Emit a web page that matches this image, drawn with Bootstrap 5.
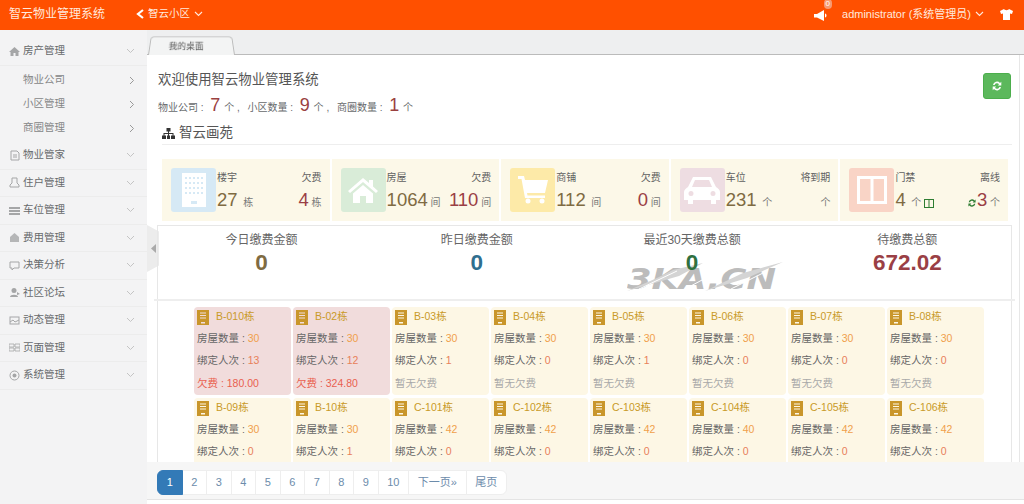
<!DOCTYPE html>
<html lang="zh">
<head>
  <meta charset="UTF-8" />
  <title>智云物业管理系统</title>
  <link href="https://cdn.jsdelivr.net/npm/bootstrap@5.3.0/dist/css/bootstrap.min.css" rel="stylesheet" />
  <style>
    html, body { height: 100%; overflow: hidden; }
    body {
      font-family: "Liberation Sans", "Noto Sans CJK SC", sans-serif;
      font-size: 10.5px;
      color: #676a6c;
      background: #f3f3f4;
    }
    .top-bar { height: 30px; background: #ff5000; color: #ffe9dd; padding-bottom: 2px; }
    .brand-name { width: 135px; padding-left: 9px; font-size: 12px; }
    .top-user { font-size: 11px; }
    .bell-wrap { position: relative; width: 18px; height: 14px; margin-right: 10px; }
    .bell-count { position: absolute; top: -8px; right: 0; font-size: 8px; line-height: 10px; color: #fff; background: #f69a72; border-radius: 5px; padding: 0 2px; }
    .shirt-ico { margin: 0 11px 0 16px; }
    .page-wrap { height: 474px; }
    .side-menu { width: 147px; flex: none; background: #f3f3f4; }
    .side-item { height: 27.5px; padding: 0 12px 0 9px; border-bottom: 1px solid #ececec; color: #676a6c; }
    .side-item .ico { width: 11px; margin-right: 3px; flex: none; }
    .side-head { height: 36px; padding-top: 7px; }
    .side-sub { height: 24px; padding: 0 12px 0 23px; color: #858687; }
    .side-subs { padding: 2px 0; height: 76px; }
    .main-area { flex: 1; min-width: 0; position: relative; background: #fff; }
    .tab-bar { height: 25px; background: #eeeff0; border-bottom: 1px solid #bbb; padding-left: 1px; }
    .tab-one {
      width: 87px; height: 20px; margin-top: 5px; font-size: 9px; line-height: 20px; color: #555;
      background: #f3f4f4; border: 1px solid #bbb; border-bottom: 0; border-radius: 4px 4px 0 0;
      transform: perspective(30px) rotateX(6deg); transform-origin: bottom; padding-left: 19px;
    }
    .tab-label { display: block; }
    .content-pane { flex: 1; min-height: 0; overflow: hidden; padding: 0 7px 0 11px; border-right: 1px solid #e7e7e7; margin-right: 4px; }
    .welcome { font-size: 13.4px; line-height: 20px; color: #555; padding-top: 15px; }
    .count-line { font-size: 10px; line-height: 20px; margin-top: 5px; color: #676a6c; }
    .count-line b { font-weight: 400; font-size: 18px; color: #9a4040; font-family: "Liberation Sans", sans-serif; margin: 0 1px 0 4px; }
    .count-line .sep { margin-right: 5px; }
    .refresh-btn { width: 28px; height: 26px; background: #5cb85c; border: 1px solid #4cae4c; border-radius: 3px; padding: 0; position: absolute; right: 13px; top: 43px; }
    .section-title { font-size: 13.5px; line-height: 22px; color: #555; margin: 4px 0 0 4px; border-bottom: 1px solid #eee; }
    .stat-row { display: flex; gap: 2px; margin: 14px 4px 0; height: 62px; }
    .stat-cell { flex: 1; display: flex; background: #fcf8e8; padding: 9px 8px 0 9px; min-width: 0; }
    .stat-ico { width: 45px; height: 44px; border-radius: 3px; flex: none; display: flex; align-items: center; justify-content: center; }
    .stat-body { flex: 1; min-width: 0; padding-left: 1px; }
    .stat-line { display: flex; justify-content: space-between; align-items: baseline; white-space: nowrap; }
    .stat-line.names { font-size: 10px; line-height: 14px; margin-top: 3px; color: #5f5f5f; }
    .stat-line.nums { font-size: 10px; margin-top: 2px; line-height: 26px; color: #777; }
    .stat-line.nums b { font-weight: 400; font-size: 18.5px; font-family: "Liberation Sans", sans-serif; color: #7f6b42; }
    .stat-line.nums b.owed { color: #9a3f45; }
    .money-box { margin: 4px 0 0 -1px; border: 1px solid #e7e7e7; position: relative; }
    .money-row { display: flex; height: 75px; border-bottom: 2px solid #eeeeee; margin: 0 -4px; }
    .money-cell { flex: 1; text-align: center; padding-top: 7px; color: #666; font-size: 12px; line-height: 14px; position: relative; z-index: 1; }
    .money-cell strong { display: block; font-size: 22.5px; line-height: 26px; margin-top: 3px; font-family: "Liberation Sans", sans-serif; }
    .wmark {
      position: absolute; left: 469px; top: 35px; font-family: "DejaVu Sans", sans-serif; font-size: 29px; line-height: 36px; font-weight: 700; font-style: italic;
      color: #bcbcbc; white-space: nowrap; transform: scaleX(1.22); transform-origin: left;
    }
    .wmark-streaks { position: absolute; left: 469px; top: 35px; }
    .tower-grid { display: grid; grid-template-columns: repeat(8, 97px); gap: 3px 2px; padding: 6px 0 0 36px; }
    .tower-card { height: 88px; background: #fdf7e5; border-radius: 4px; padding: 0 3px; font-size: 10.5px; color: #666; }
    .tower-card.in-debt { background: #f1dcdc; }
    .tower-name { height: 20px; color: #c99a28; font-size: 10.5px; display: flex; align-items: center; gap: 7px; }
    .tower-line { line-height: 22.4px; white-space: nowrap; }
    .tower-line i { font-style: normal; color: #f0a04b; }
    .tower-line.red-num i { color: #e8805a; }
    .tower-line.owe, .tower-line.owe i { color: #e95f50; }
    .tower-line.none { color: #a9a9a9; }
    .pager-bar { height: 38px; flex: none; background: #f6f6f6; border-bottom: 1px solid #e4e4e4; margin-bottom: 4px; padding: 8px 0 0 10px; }
    .pager-bar .pagination { margin: 0; }
    .pager-bar .page-link { font-size: 11px; line-height: 13px; height: 25px; padding: 5px 8.7px; color: #6c8cab; border-color: #eee; }
    .pager-bar .page-item.active .page-link { background: #337ab7; border-color: #337ab7; color: #fff; }
    .side-flap { position: absolute; left: 0; top: 195px; width: 12px; height: 47px; background: #ececec; clip-path: polygon(0 0, 100% 14%, 100% 86%, 0 100%); display: flex; align-items: center; justify-content: center; }
  </style>
</head>
<body>
  <nav class="top-bar d-flex align-items-center">
    <div class="brand-name">智云物业管理系统</div>
    <div class="d-flex align-items-center gap-1">
      <svg width="9" height="10" viewBox="0 0 9 10"><path d="M8 1 3 5l5 4" fill="none" stroke="#fff" stroke-width="2.2"/></svg>
      <span>智云小区</span>
      <svg width="9" height="6" viewBox="0 0 9 6"><path d="M1 1l3.500 3.500L8 1" fill="none" stroke="#ffe9dd" stroke-width="1.1"/></svg>
    </div>
    <div class="ms-auto d-flex align-items-center top-user">
      <div class="bell-wrap">
        <svg width="14" height="12" viewBox="0 0 14 12"><path d="M0 4h3l7-4v11L3 7.500H0zM11 3.500c2 .5 2 3.500 0 4z" fill="#fff"/></svg>
        <span class="bell-count">0</span>
      </div>
      <span>administrator (系统管理员)</span>
      <svg width="9" height="6" viewBox="0 0 9 6" class="ms-1"><path d="M1 1l3.500 3.500L8 1" fill="none" stroke="#ffe9dd" stroke-width="1.1"/></svg>
      <svg width="13" height="11" viewBox="0 0 13 11" class="shirt-ico"><path d="M4 0 0 2l1 3 2-.6V11h7V4.400l2 .6 1-3-4-2c-.5 1.500-4.500 1.500-5 0z" fill="#fff"/></svg>
    </div>
  </nav>

  <div class="page-wrap d-flex">
    <aside class="side-menu" id="sideMenu"></aside>

    <main class="main-area d-flex flex-column">
      <div class="tab-bar d-flex">
        <div class="tab-one"><span class="tab-label">我的桌面</span></div>
      </div>
      <div class="side-flap">
        <svg width="5" height="9" viewBox="0 0 5 9"><path d="M5 0v9L0 4.500z" fill="#aaa"/></svg>
      </div>
      <div class="content-pane">
        <div class="welcome">欢迎使用智云物业管理系统</div>
        <div class="count-line">物业公司 : <b>7</b> 个 <span class="sep">,</span> 小区数量 : <b>9</b> 个 <span class="sep">,</span> 商圈数量 : <b>1</b> 个</div>
        <button class="refresh-btn" aria-label="刷新">
          <svg width="12" height="12" viewBox="0 0 12 12"><path d="M2 5a4 4 0 0 1 7-2l1.300-1.200V5.500H6.800L8 4.200A2.500 2.500 0 0 0 3.600 5zM10 7a4 4 0 0 1-7 2l-1.300 1.200V6.500h3.500L4 7.800A2.500 2.500 0 0 0 8.400 7z" fill="#fff"/></svg>
        </button>
        <div class="section-title d-flex align-items-center gap-1">
          <svg width="13" height="11" viewBox="0 0 13 11"><path d="M4.500 0h4v3.500H7V5h4.500v2.500H13V11H9V7.500h1.500V6H7v1.500h1V11H5V7.500h1V6H2.500v1.500H4V11H0V7.500h1.500V5H6V3.500H4.500z" fill="#333"/></svg>
          <span>智云画苑</span>
        </div>

        <div class="stat-row">
          <div class="stat-cell">
            <div class="stat-ico" style="background:#d6e9f5">
              <svg width="24" height="34" viewBox="0 0 24 34"><rect width="24" height="34" fill="#fff"/><g fill="#d6e9f5"><rect x="3" y="4" width="2" height="2"/><rect x="7" y="4" width="2" height="2"/><rect x="11" y="4" width="2" height="2"/><rect x="15" y="4" width="2" height="2"/><rect x="19" y="4" width="2" height="2"/><rect x="3" y="9" width="2" height="2"/><rect x="7" y="9" width="2" height="2"/><rect x="11" y="9" width="2" height="2"/><rect x="15" y="9" width="2" height="2"/><rect x="19" y="9" width="2" height="2"/><rect x="3" y="14" width="2" height="2"/><rect x="7" y="14" width="2" height="2"/><rect x="11" y="14" width="2" height="2"/><rect x="15" y="14" width="2" height="2"/><rect x="19" y="14" width="2" height="2"/><rect x="3" y="19" width="2" height="2"/><rect x="7" y="19" width="2" height="2"/><rect x="11" y="19" width="2" height="2"/><rect x="15" y="19" width="2" height="2"/><rect x="19" y="19" width="2" height="2"/><rect x="9" y="28" width="6" height="3"/></g></svg>
            </div>
            <div class="stat-body">
              <div class="stat-line names"><span>楼宇</span><span>欠费</span></div>
              <div class="stat-line nums"><span><b>27</b> &nbsp;栋</span><span><b class="owed">4</b> 栋</span></div>
            </div>
          </div>
          <div class="stat-cell">
            <div class="stat-ico" style="background:#d9ecd8">
              <svg width="30" height="25" viewBox="0 0 30 25"><path d="M15 0 0 13l2 2L15 4l13 11 2-2-5-4.400V2h-4v3zM5 15.500V25h7v-7h6v7h7v-9.500L15 7z" fill="#fff"/></svg>
            </div>
            <div class="stat-body">
              <div class="stat-line names"><span>房屋</span><span>欠费</span></div>
              <div class="stat-line nums"><span><b>1064</b> 间</span><span><b class="owed">110</b> 间</span></div>
            </div>
          </div>
          <div class="stat-cell">
            <div class="stat-ico" style="background:#fdeaa8">
              <svg width="30" height="28" viewBox="0 0 30 28"><path d="M0 0h6l1 4h23l-3 13H9l.5 2.500H27V22H7L3.500 3H0z" fill="#fff"/><circle cx="10" cy="25" r="2.500" fill="#fff"/><circle cx="24" cy="25" r="2.500" fill="#fff"/></svg>
            </div>
            <div class="stat-body">
              <div class="stat-line names"><span>商铺</span><span>欠费</span></div>
              <div class="stat-line nums"><span><b>112</b> &nbsp;间</span><span><b class="owed">0</b> 间</span></div>
            </div>
          </div>
          <div class="stat-cell">
            <div class="stat-ico" style="background:#eedde2">
              <svg width="36" height="27" viewBox="0 0 36 27"><path fill-rule="evenodd" d="M9 0h18l5 10c2 1 4 3 4 5v8h-4v4h-5v-4H9v4H4v-4H0v-8c0-2 2-4 4-5zM11 3 8 10h20l-3-7zM7 14a2.500 2.500 0 1 0 0 5 2.500 2.500 0 0 0 0-5zM29 14a2.500 2.500 0 1 0 0 5 2.500 2.500 0 0 0 0-5z" fill="#fff"/></svg>
            </div>
            <div class="stat-body">
              <div class="stat-line names"><span>车位</span><span>将到期</span></div>
              <div class="stat-line nums"><span><b>231</b> &nbsp;个</span><span>个</span></div>
            </div>
          </div>
          <div class="stat-cell">
            <div class="stat-ico" style="background:#f9d4c6">
              <svg width="30" height="28" viewBox="0 0 30 28"><path fill-rule="evenodd" d="M0 0h30v28H0zM3 3v22h10.500V3zM16.500 3v22H27V3z" fill="#fff"/></svg>
            </div>
            <div class="stat-body">
              <div class="stat-line names"><span>门禁</span><span>离线</span></div>
              <div class="stat-line nums">
                <span><b>4</b> &nbsp;个 <svg width="10" height="9" viewBox="0 0 10 9"><path fill-rule="evenodd" d="M0 0h10v9H0zM1 1v7h3.500V1zM5.500 1v7H9V1z" fill="#2e7d32"/></svg></span>
                <span><svg width="10" height="10" viewBox="0 0 12 12"><path d="M2 5a4 4 0 0 1 7-2l1.300-1.200V5.500H6.800L8 4.200A2.500 2.500 0 0 0 3.600 5zM10 7a4 4 0 0 1-7 2l-1.300 1.200V6.500h3.500L4 7.800A2.500 2.500 0 0 0 8.400 7z" fill="#2e7d32"/></svg><b class="owed">3</b> 个</span>
              </div>
            </div>
          </div>
        </div>

        <div class="money-box">
          <div class="wmark">3KA.CN</div>
          <svg class="wmark-streaks" width="165" height="36" viewBox="0 0 165 36">
            <path d="M0 30 30 17 46 9 76 2 52 15zM78 30 116 12 156 1 120 17z" fill="#d4d4d4"/>
            <path d="M12 28 50 10M60 27 92 10M104 28 140 10" stroke="#fff" stroke-width="1" fill="none"/>
          </svg>
          <div class="money-row">
            <div class="money-cell">今日缴费金额<strong style="color:#7f6b42">0</strong></div>
            <div class="money-cell">昨日缴费金额<strong style="color:#2f6f8f">0</strong></div>
            <div class="money-cell">最近30天缴费总额<strong style="color:#2f7040">0</strong></div>
            <div class="money-cell">待缴费总额<strong style="color:#9a3f45">672.02</strong></div>
          </div>
          <div class="tower-grid" id="towerGrid"></div>
        </div>
      </div>
      <div class="pager-bar">
        <ul class="pagination">
          <li class="page-item active"><a class="page-link" href="#">1</a></li>
          <li class="page-item"><a class="page-link" href="#">2</a></li>
          <li class="page-item"><a class="page-link" href="#">3</a></li>
          <li class="page-item"><a class="page-link" href="#">4</a></li>
          <li class="page-item"><a class="page-link" href="#">5</a></li>
          <li class="page-item"><a class="page-link" href="#">6</a></li>
          <li class="page-item"><a class="page-link" href="#">7</a></li>
          <li class="page-item"><a class="page-link" href="#">8</a></li>
          <li class="page-item"><a class="page-link" href="#">9</a></li>
          <li class="page-item"><a class="page-link" href="#">10</a></li>
          <li class="page-item"><a class="page-link" href="#">下一页»</a></li>
          <li class="page-item"><a class="page-link" href="#">尾页</a></li>
        </ul>
      </div>
    </main>
  </div>

  <script>
    const chev = '<svg class="ms-auto" width="9" height="6" viewBox="0 0 9 6"><path d="M1 1l3.500 3.500L8 1" fill="none" stroke="#c4c4c4" stroke-width="1"/></svg>';
    const chevR = '<svg class="ms-auto" width="6" height="9" viewBox="0 0 6 9"><path d="M1 1l3.500 3.500L1 8" fill="none" stroke="#999" stroke-width="1"/></svg>';
    const c = '#a5a6a7';
    const icons = {
      house: `<path d="M5.500 1 0 6h1.500v4h3V7h2v3h3V6H11z" fill="${c}"/>`,
      doc: `<path d="M2 1h6l2 2v7H2z" fill="none" stroke="${c}"/><path d="M4 5h4M4 7h4" stroke="${c}"/>`,
      user: `<path d="M3 1h5v5l2 2v2H1V8l2-2z" fill="none" stroke="${c}"/>`,
      bars: `<path d="M0 2h11v2H0zM0 5h11v2H0zM0 8h11v2H0z" fill="${c}"/>`,
      coin: `<path d="M5.500 1 1 5v5h9V5z" fill="${c}" opacity=".8"/>`,
      card: `<path d="M1 2h9v6H5l-2 2V8H1z" fill="none" stroke="${c}"/>`,
      person: `<circle cx="5" cy="3.500" r="2.500" fill="${c}"/><path d="M1 10c0-3 8-3 8 0zM8 5l3 2-3 1z" fill="${c}"/>`,
      pic: `<rect x="1" y="2" width="9" height="7" fill="none" stroke="${c}"/><path d="M1 7l3-2 2 2 4-2" fill="none" stroke="${c}"/>`,
      grid: `<path d="M0 2h5v3H0zM6 2h5v3H6zM0 6h5v3H0zM6 6h5v3H6z" fill="none" stroke="${c}" stroke-width=".8"/>`,
      gear: `<circle cx="5.500" cy="5.500" r="4.500" fill="none" stroke="${c}"/><circle cx="5.500" cy="5.500" r="2" fill="${c}"/>`
    };
    const ico = n => `<svg class="ico" width="11" height="11" viewBox="0 0 11 11">${icons[n]}</svg>`;
    const menu = [['物业管家','doc'],['住户管理','user'],['车位管理','bars'],['费用管理','coin'],['决策分析','card'],['社区论坛','person'],['动态管理','pic'],['页面管理','grid'],['系统管理','gear']];
    let html = `<div class="side-item side-head d-flex align-items-center">${ico('house')}<span>房产管理</span>${chev}</div><div class="side-subs">`;
    ['物业公司','小区管理','商圈管理'].forEach(t => { html += `<div class="side-sub d-flex align-items-center"><span>${t}</span>${chevR}</div>`; });
    html += '</div>';
    menu.forEach(m => { html += `<div class="side-item d-flex align-items-center">${ico(m[1])}<span>${m[0]}</span>${chev}</div>`; });
    document.getElementById('sideMenu').innerHTML = html;

    const towers = [
      ['B-010栋',30,13,'180.00'],['B-02栋',30,12,'324.80'],['B-03栋',30,1,''],['B-04栋',30,0,''],['B-05栋',30,1,''],['B-06栋',30,0,''],['B-07栋',30,0,''],['B-08栋',30,0,''],
      ['B-09栋',30,0],['B-10栋',30,1],['C-101栋',42,0],['C-102栋',42,0],['C-103栋',42,0],['C-104栋',40,0],['C-105栋',42,0],['C-106栋',42,0]
    ];
    const towerIco = '<svg width="12" height="15" viewBox="0 0 12 15"><path fill-rule="evenodd" d="M0 0h12v15H0zM3 2.500v1h6v-1zM3 5v1h6V5zM3 7.500v1h6v-1zM4 12v1.500h4V12z" fill="#c9962b"/></svg>';
    // second row runs under the pager, its last line never shows
    document.getElementById('towerGrid').innerHTML = towers.map(t => `
      <div class="tower-card ${t[3] ? 'in-debt' : ''}">
        <div class="tower-name">${towerIco}<span>${t[0]}</span></div>
        <div class="tower-line">房屋数量 : <i>${t[1]}</i></div>
        <div class="tower-line red-num">绑定人次 : <i>${t[2]}</i></div>
        ${t[3] ? `<div class="tower-line owe">欠费 : <i>${t[3]}</i></div>` : t[3] === '' ? '<div class="tower-line none">暂无欠费</div>' : ''}
      </div>`).join('');
  </script>
  <script src="https://cdn.jsdelivr.net/npm/bootstrap@5.3.0/dist/js/bootstrap.bundle.min.js"></script>
</body>
</html>
